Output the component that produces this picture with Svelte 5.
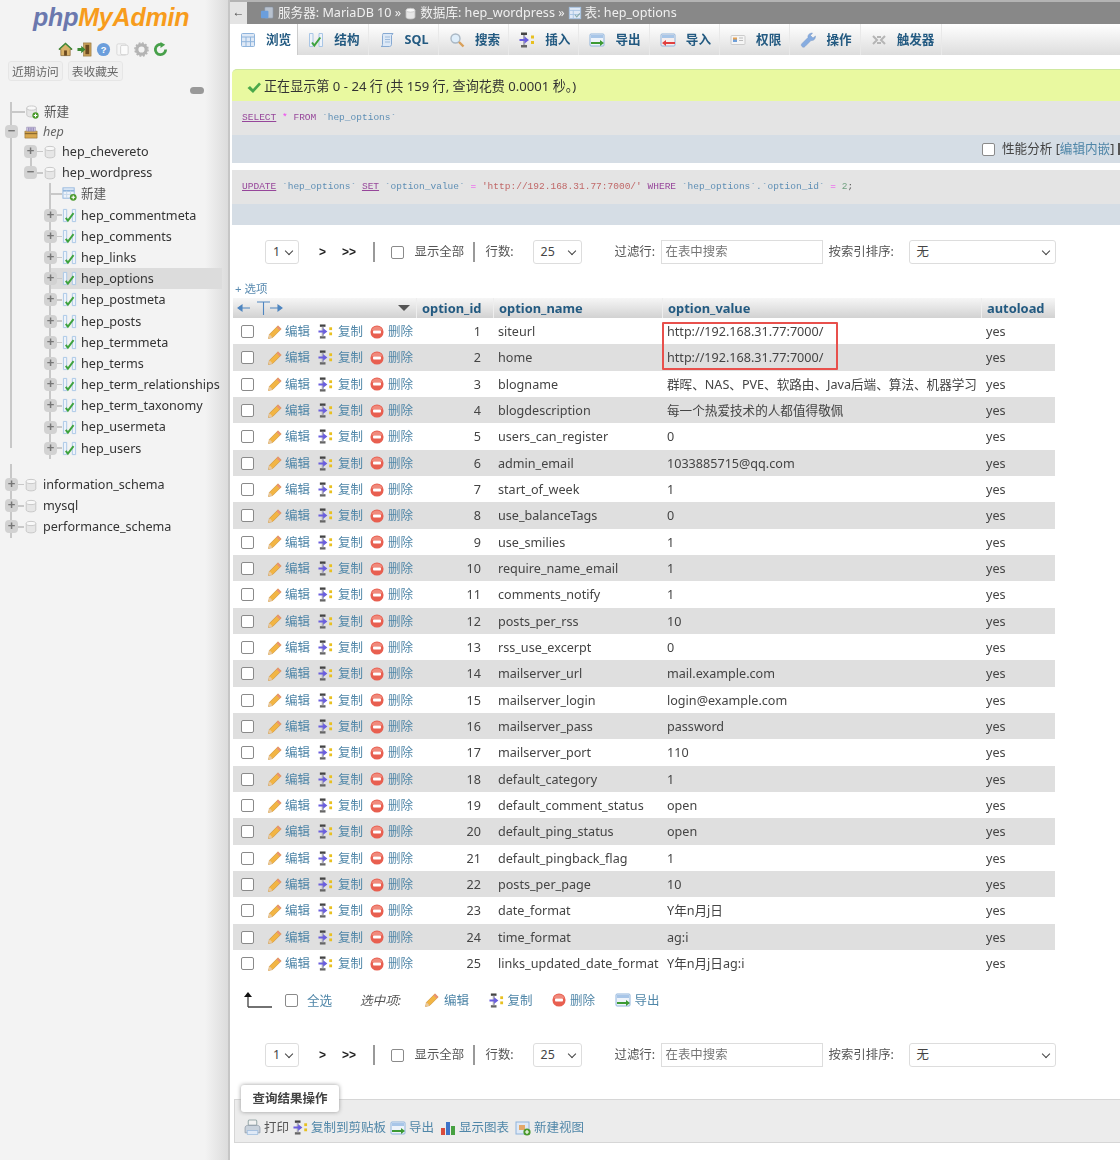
<script>
	const icons = {
		pencil: '<path d="M1.500 14.500l1-4.200L11 1.800l3.200 3.200-8.500 8.500z" fill="#f2b544" stroke="#c98a2a" stroke-width=".6"/><path d="M1.500 14.500l1-4.200 3.200 3.200z" fill="#e9c9a0"/><path d="M11 1.800l3.200 3.200-1.400 1.400-3.200-3.200z" fill="#e8907a"/>',
		copy: '<rect x="2" y="0.500" width="6" height="2.500" fill="#444"/><rect x="2" y="13" width="6" height="2.500" fill="#666"/><rect x="4" y="3" width="2.200" height="10" fill="#aab"/><path d="M0.500 7h5V4.500l4.500 3.500-4.500 3.500V9h-5z" fill="#6a5ede"/><rect x="12" y="3.500" width="3" height="3" fill="#e8c020"/><rect x="12" y="9" width="3" height="3" fill="#e8c020"/>',
		del: '<circle cx="8" cy="8" r="7.500" fill="#e85f50"/><path d="M1.500 6a7 7 0 0 1 13 0z" fill="#f08a7c"/><rect x="3.500" y="6.300" width="9" height="3.400" rx=".8" fill="#fff"/>',
		db: '<path d="M2.500 4v8.500c0 1.200 2.500 2.200 5.500 2.200s5.500-1 5.500-2.200V4z" fill="#e6e6e6" stroke="#c4c4c4"/><ellipse cx="8" cy="4" rx="5.500" ry="2.400" fill="#f8f8f8" stroke="#c4c4c4"/>',
		dbnew: '<path d="M2 3.500v8c0 1.200 2.500 2.200 5.500 2.200s5.500-1 5.500-2.200v-8z" fill="#e6e6e6" stroke="#c4c4c4"/><ellipse cx="7.500" cy="3.500" rx="5.500" ry="2.400" fill="#f8f8f8" stroke="#c4c4c4"/><circle cx="12" cy="12" r="3.600" fill="#4a9a2c"/><path d="M10 12h4M12 10v4" stroke="#fff" stroke-width="1.200"/>',
		tablenew: '<rect x="1" y="2" width="12" height="11" fill="#eef3fa" stroke="#8fb4dc"/><path d="M1 5h12" stroke="#8fb4dc" stroke-width="2"/><path d="M5 5v8M9 5v8M1 9h12" stroke="#c4d6ea"/><circle cx="12" cy="12" r="3.600" fill="#4a9a2c"/><path d="M10 12h4M12 10v4" stroke="#fff" stroke-width="1.200"/>',
		struct: '<path d="M1.500 1.500h3.500v13H1.500zM11 1.500h3.500v13H11z" fill="#eef3fa" stroke="#a9c6e6"/><path d="M4 10.500l2.300 3 6-8" fill="none" stroke="#3da23d" stroke-width="2"/>',
		browse: '<rect x="1.500" y="1.500" width="13" height="13" rx="1" fill="#dfe9f6" stroke="#8fb4dc"/><path d="M1.500 5h13M6 5v9.500M10.500 5v9.500M1.500 9.700h13" stroke="#8fb4dc"/>',
		sql: '<path d="M4 1.500h10l-1.500 2v9c0 1-1 2-2 2H2c1 0 1.500-1 1.500-2v-9c0-1 .5-2 .5-2z" fill="#dce8f6" stroke="#86a9d2"/><path d="M6 5h5M6 7.500h5M6 10h5" stroke="#9fbcdc"/>',
		search: '<circle cx="6.500" cy="6.500" r="4.500" fill="#dfeefa" stroke="#a9b7c4" stroke-width="1.400"/><path d="M10 10l4.500 4.500" stroke="#d9a05a" stroke-width="2.400"/>',
		exportt: '<rect x="1" y="2" width="14" height="12" rx="1" fill="#eef3fa" stroke="#8fb4dc"/><rect x="2" y="3" width="12" height="3" fill="#a8c6e8"/><path d="M2 10h9V8l4 3-4 3v-2H2z" fill="#3c9a34"/>',
		importt: '<rect x="1" y="2" width="14" height="12" rx="1" fill="#f6eeee" stroke="#8fb4dc"/><rect x="2" y="3" width="12" height="3" fill="#a8c6e8"/><path d="M15 10H6V8l-4 3 4 3v-2h9z" fill="#e04040"/>',
		priv: '<rect x="1" y="3.500" width="14" height="9" rx="1" fill="#f5f5f5" stroke="#ccc"/><rect x="3" y="5.500" width="4" height="4.500" fill="#e5a050"/><rect x="3" y="7.500" width="4" height="2.500" fill="#6f9fd8"/><path d="M9 6h4M9 8.500h4" stroke="#bbb"/>',
		ops: '<path d="M2 14.500c-1-1-1-2 0-3l6-6c-.5-2 1-4.500 4.500-4.500l-2 2.500 2.500 2.500 2.500-2c0 3.500-2.500 5-4.500 4.500l-6 6c-1 1-2 1-3 0z" fill="#86ace0" stroke="#7a98c4" stroke-width=".5"/>',
		trig: '<path d="M2 4l4 4-4 4M14 4l-4 4 4 4M6 5h4M6 11h4" fill="none" stroke="#b5b5b5" stroke-width="2"/>',
		home: '<path d="M1 8l7-6.500L15 8h-2v6.500H3V8z" fill="#d9b26a" stroke="#7b5a26" stroke-width=".7"/><path d="M1 8l7-6.500L15 8" fill="none" stroke="#3f8a3a" stroke-width="1.600"/><rect x="6.500" y="9" width="3" height="5.500" fill="#6b4a20"/>',
		exit: '<rect x="7" y="1" width="8" height="14" fill="#caa25c" stroke="#8c6a2e" stroke-width=".6"/><rect x="9" y="3" width="4" height="10" fill="#6b4a20"/><path d="M0.500 6.500h4V4l4.500 4-4.500 4V9.500h-4z" fill="#3c8a34"/>',
		box: '<path d="M1 7h14v8H1z" fill="#d9a84e" stroke="#8c6a2e" stroke-width=".6"/><path d="M3 7V2.500h10V7z" fill="#cfc8e2" stroke="#8a80a8" stroke-width=".6"/><path d="M5.500 3v4M8 3v4M10.500 3v4" stroke="#7d70a8"/><rect x="1" y="9" width="14" height="1.500" fill="#8c6a2e"/>',
		help: '<circle cx="8" cy="8" r="7" fill="#6b9edc"/><text x="8" y="11.500" text-anchor="middle" font-size="10" font-weight="700" fill="#fff" font-family="Liberation Sans">?</text>',
		docs: '<rect x="2" y="2" width="10" height="12" rx="1.500" fill="#f6f6f6" stroke="#d8d8d8"/><rect x="6" y="3.500" width="8" height="10" rx="1.500" fill="#fbfbfb" stroke="#d0d0d0"/>',
		gear: '<circle cx="8" cy="8" r="5" fill="none" stroke="#b4b4b4" stroke-width="3.400"/><circle cx="8" cy="8" r="7" fill="none" stroke="#b4b4b4" stroke-width="1.600" stroke-dasharray="2 1.700"/>',
		reload: '<path d="M13.500 8A5.500 5.500 0 1 1 9 2.600" fill="none" stroke="#47a04a" stroke-width="3"/><path d="M8 0l5 3-5 3.500z" fill="#47a04a"/>',
		server: '<rect x="5" y="1" width="9" height="12" rx="1" fill="#b8c2cf" stroke="#7f8a99" stroke-width=".6"/><rect x="1" y="5" width="8" height="8" rx="1" fill="#6b9edc"/>',
		table: '<rect x="1.500" y="1.500" width="13" height="13" fill="#dfe9f6" stroke="#a5c2e2"/><path d="M1.500 5h13M6 5v9.500M1.500 9.700h13" stroke="#a5c2e2"/><path d="M8 10l2 2.500 3.500-4" fill="none" stroke="#8aa" stroke-width="1.200"/>',
		print: '<rect x="4" y="1" width="8" height="5" rx="1" fill="#f2f2f2" stroke="#9aa"/><path d="M1 8.500c0-1.500 1-2.500 2.500-2.500h9c1.500 0 2.500 1 2.500 2.500V13H1z" fill="#c9d2dc" stroke="#8c98a6" stroke-width=".7"/><rect x="3" y="11" width="10" height="3.500" fill="#dfe9f6" stroke="#8fb4dc" stroke-width=".6"/>',
		chart: '<rect x="1" y="8" width="4" height="7" fill="#d94c3c"/><rect x="6" y="2" width="4" height="13" fill="#3f74c8"/><rect x="11" y="6" width="4" height="9" fill="#46a040"/>',
		view: '<rect x="1" y="2" width="13" height="12" fill="#dfe9f6" stroke="#8fb4dc"/><rect x="4" y="5" width="6" height="5" fill="#e3a86a"/><circle cx="12" cy="12" r="3.600" fill="#4a9a2c"/><path d="M10 12h4M12 10v4" stroke="#fff" stroke-width="1.200"/>'
	};

	const tables = [
		'hep_commentmeta', 'hep_comments', 'hep_links', 'hep_options', 'hep_postmeta', 'hep_posts',
		'hep_termmeta', 'hep_terms', 'hep_term_relationships', 'hep_term_taxonomy', 'hep_usermeta', 'hep_users'
	];

	const tabs = [
		['browse', '浏览'], ['struct', '结构'], ['sql', 'SQL'], ['search', '搜索'], ['copy', '插入'],
		['exportt', '导出'], ['importt', '导入'], ['priv', '权限'], ['ops', '操作'], ['trig', '触发器']
	];

	const rows = [
		['siteurl', 'http://192.168.31.77:7000/'],
		['home', 'http://192.168.31.77:7000/'],
		['blogname', '群晖、NAS、PVE、软路由、Java后端、算法、机器学习'],
		['blogdescription', '每一个热爱技术的人都值得敬佩'],
		['users_can_register', '0'],
		['admin_email', '1033885715@qq.com'],
		['start_of_week', '1'],
		['use_balanceTags', '0'],
		['use_smilies', '1'],
		['require_name_email', '1'],
		['comments_notify', '1'],
		['posts_per_rss', '10'],
		['rss_use_excerpt', '0'],
		['mailserver_url', 'mail.example.com'],
		['mailserver_login', 'login@example.com'],
		['mailserver_pass', 'password'],
		['mailserver_port', '110'],
		['default_category', '1'],
		['default_comment_status', 'open'],
		['default_ping_status', 'open'],
		['default_pingback_flag', '1'],
		['posts_per_page', '10'],
		['date_format', 'Y年n月j日'],
		['time_format', 'ag:i'],
		['links_updated_date_format', 'Y年n月j日ag:i']
	];
</script>

{#snippet icon(name, size = 14)}
	<svg class="ic" viewBox="0 0 16 16" width={size} height={size}>{@html icons[name]}</svg>
{/snippet}

{#snippet pager()}
	<div class="pager">
		<span class="sel page-sel">1</span>
		<b class="next">&gt;</b>
		<b class="last">&gt;&gt;</b>
		<i class="sep first-sep"></i>
		<span class="check"></span>
		<span class="all">显示全部</span>
		<i class="sep"></i>
		<span class="rows-label">行数:</span>
		<span class="sel count-sel">25</span>
		<span class="filter-label">过滤行:</span>
		<span class="search">在表中搜索</span>
		<span class="order-label">按索引排序:</span>
		<span class="sel order-sel">无</span>
	</div>
{/snippet}

<div class="page">
	<aside>
		<div class="logo"><span class="php">php</span><span class="my">MyAdmin</span></div>
		<div class="quick">
			{#each ['home', 'exit', 'help', 'docs', 'gear', 'reload'] as n}
				{@render icon(n, 15)}
			{/each}
		</div>
		<div class="recent">
			<span>近期访问</span>
			<span>表收藏夹</span>
		</div>
		<div class="link-row"><span class="pill"></span></div>

		<div class="group top">
			<div class="item lv0 first"><i class="dash"></i>{@render icon('dbnew', 14)}<span class="cjk">新建</span></div>
			<div class="item lv0 hep"><i class="exp">−</i>{@render icon('box', 14)}<em>hep</em></div>
			<div class="lv1">
				<div class="item linked"><i class="exp">+</i><i class="dash"></i>{@render icon('db', 14)}<span>hep_chevereto</span></div>
				<div class="item"><i class="exp">−</i><i class="dash"></i>{@render icon('db', 14)}<span>hep_wordpress</span></div>
				<div class="lv2">
					<div class="item"><i class="dash long"></i>{@render icon('tablenew', 15)}<span class="cjk">新建</span></div>
					{#each tables as t}
						<div class="item" class:current={t === 'hep_options'}><i class="exp">+</i><i class="dash"></i>{@render icon('struct', 15)}<span>{t}</span></div>
					{/each}
				</div>
			</div>
		</div>
		<div class="group bottom">
			{#each ['information_schema', 'mysql', 'performance_schema'] as d}
				<div class="item lv0"><i class="exp">+</i><i class="dash"></i>{@render icon('db', 14)}<span>{d}</span></div>
			{/each}
		</div>
	</aside>

	<main>
		<div class="crumbs">
			<span class="collapse">←</span>
			<span class="trail">
				{@render icon('server', 15)}<span>服务器: MariaDB 10 »</span>
				{@render icon('db', 13)}<span>数据库: hep_wordpress »</span>
				{@render icon('table', 14)}<span>表: hep_options</span>
			</span>
		</div>
		<nav>
			{#each tabs as [ic, label], i}
				<span class="tab" class:active={i === 0}>{@render icon(ic, 16)}<b>{label}</b></span>
			{/each}
		</nav>

		<div class="notice">
			<svg viewBox="0 0 16 16" width="16" height="16"><path d="M1.500 9l2.500-2 3 3 6-6.500 2 1.800L7 14z" fill="#4aa84a" /></svg>
			正在显示第 0 - 24 行 (共 159 行, 查询花费 0.0001 秒。)
		</div>
		<div class="sql"><u class="kw">SELECT</u> <span class="op">*</span> <span class="kw">FROM</span> <span class="id">`hep_options`</span></div>
		<div class="tools">
			<span class="check"></span><span class="perf">性能分析 [<a href="#top">编辑内嵌</a>]</span><i class="bar"></i>
		</div>
		<div class="sql second"><u class="kw">UPDATE</u> <span class="id">`hep_options`</span> <u class="kw">SET</u> <span class="id">`option_value`</span> <span class="op">=</span> <span class="str">'http://192.168.31.77:7000/'</span> <span class="kw">WHERE</span> <span class="id">`hep_options`.`option_id`</span> <span class="op">=</span> <span class="num">2</span>;</div>
		<div class="tools thin"></div>

		{@render pager()}

		<div class="options"><span>+</span> 选项</div>

		<div class="grid">
			<div class="head">
				<div class="first-col">
					<svg viewBox="0 0 46 16" width="46" height="16"><path d="M1 8h12M1 8l4-3v6zM20 2h13M26.500 2v13M33 8h12M45 8l-4-3v6z" fill="#4f86c0" stroke="#4f86c0" stroke-width="1.100" /></svg>
					<span class="sort"></span>
				</div>
				<div>option_id</div>
				<div>option_name</div>
				<div>option_value</div>
				<div>autoload</div>
			</div>
			{#each rows as [name, value], i}
				<div class="row">
					<div class="actions">
						<span class="check"></span>
						<span class="act edit">{@render icon('pencil', 16)}<a href="#top">编辑</a></span>
						<span class="act copy">{@render icon('copy', 15)}<a href="#top">复制</a></span>
						<span class="act drop">{@render icon('del', 14)}<a href="#top">删除</a></span>
					</div>
					<div class="id-cell">{i + 1}</div>
					<div>{name}</div>
					<div>{value}</div>
					<div>yes</div>
				</div>
			{/each}
			<div class="mark"></div>
		</div>

		<div class="bulk">
			<svg class="up" viewBox="0 0 28 18" width="28" height="18"><path d="M4 16V4M4 16h24" fill="none" stroke="#444" stroke-width="1.300" /><path d="M0 6l4-5 4 5z" fill="#111" /></svg>
			<span class="check"></span>
			<a class="select-all" href="#top">全选</a>
			<em>选中项:</em>
			<span class="act">{@render icon('pencil', 16)}<a href="#top">编辑</a></span>
			<span class="act">{@render icon('copy', 15)}<a href="#top">复制</a></span>
			<span class="act">{@render icon('del', 14)}<a href="#top">删除</a></span>
			<span class="act">{@render icon('exportt', 16)}<a href="#top">导出</a></span>
		</div>

		{@render pager()}

		<section class="results">
			<div class="legend">查询结果操作</div>
			<div class="links">
				<span>{@render icon('print', 17)}<a class="dark" href="#top">打印</a></span>
				<span>{@render icon('copy', 15)}<a href="#top">复制到剪贴板</a></span>
				<span>{@render icon('exportt', 16)}<a href="#top">导出</a></span>
				<span>{@render icon('chart', 16)}<a href="#top">显示图表</a></span>
				<span>{@render icon('view', 16)}<a href="#top">新建视图</a></span>
			</div>
		</section>
	</main>
</div>

<style>
	:global(body) {
		margin: 0;
		background: #fff;
	}
	.page {
		display: flex;
		width: 1120px;
		height: 1160px;
		overflow: hidden;
		font: 12.6px/1.2 'Noto Sans', 'Noto Sans CJK SC', sans-serif;
		color: #444;
		filter: blur(0.55px);
	}
	.ic {
		flex: none;
		vertical-align: middle;
	}
	a {
		color: #4f86a8;
		text-decoration: none;
	}

	/* navigation */
	aside {
		flex: none;
		width: 228px;
		height: 100%;
		box-sizing: border-box;
		background: linear-gradient(90deg, #f3f3f3 0, #f3f3f3 205px, #dcdcdc 100%);
	}
	.logo {
		height: 31px;
		padding: 2px 0 0 33px;
		font: italic 700 25px/30px 'Liberation Sans', sans-serif;
		letter-spacing: -0.2px;
		box-sizing: border-box;
	}
	.php {
		color: #6b78ae;
	}
	.my {
		color: #f79c1c;
	}
	.quick {
		display: flex;
		gap: 4px;
		height: 22px;
		margin-top: 7px;
		padding-left: 58px;
		align-items: center;
	}
	.recent {
		display: flex;
		gap: 5px;
		margin-top: 1px;
		padding-left: 8px;
		height: 20px;
		font-size: 11.7px;
		color: #666;
	}
	.recent span {
		padding: 0 3px;
		line-height: 18px;
		height: 18px;
		background: #f0f0f0;
		border: 1px solid #e6e6e6;
		border-radius: 3px;
	}
	.link-row {
		display: flex;
		justify-content: flex-end;
		height: 23px;
		padding: 6px 24px 0 0;
		box-sizing: border-box;
	}
	.pill {
		width: 14px;
		height: 7px;
		border-radius: 4px;
		background: #999;
	}
	.group {
		margin-left: 10px;
		border-left: 2px solid #c8c8c8;
	}
	.group.top {
		margin-top: 8px;
		height: 346px;
	}
	.group.bottom {
		margin-top: 16px;
		padding-top: 10px;
		height: 64px;
	}
	.item {
		position: relative;
		display: flex;
		align-items: center;
		height: 21.2px;
		white-space: nowrap;
		color: #333;
	}
	.item.first {
		height: 20px;
		margin-top: -10px;
	}
	.item.hep {
		height: 19px;
	}
	.lv0 > .ic {
		margin-right: 5px;
	}
	.lv1 {
		margin-left: 19px;
	}
	.lv1 > .item > .ic {
		margin-right: 5px;
	}
	.lv2 {
		margin-left: 18px;
		border-left: 2px solid #c8c8c8;
		height: 276px;
	}
	.lv2 .ic {
		margin-right: 4px;
	}
	.exp {
		position: relative;
		z-index: 1;
		flex: none;
		width: 13px;
		height: 13px;
		margin-left: -7px;
		border-radius: 4px;
		background: #d2d2d2;
		color: #777;
		font: 700 13px/12px 'Liberation Sans', sans-serif;
		text-align: center;
	}
	.dash {
		flex: none;
		width: 6px;
		height: 1.5px;
		background: #c8c8c8;
	}
	.lv2 .dash {
		width: 5px;
	}
	.lv2 .dash.long {
		width: 11px;
	}
	.lv0 > .dash:first-child {
		width: 13px;
	}
	.hep .exp {
		margin-right: 6px;
	}
	.hep em {
		color: #666;
	}
	.linked::before {
		content: '';
		position: absolute;
		left: -1px;
		top: 10px;
		height: 22px;
		width: 2px;
		background: #c8c8c8;
	}
	.current {
		background: #dcdcdc;
		margin-right: 6px;
	}
	.cjk {
		color: #555;
	}

	/* main */
	main {
		flex: 1;
		min-width: 0;
		border-left: 2px solid #c6c6c6;
		box-sizing: border-box;
		height: 100%;
	}
	.crumbs {
		display: flex;
		height: 24px;
		background: #888;
		border-top: 2px solid #b4b4b4;
		box-sizing: border-box;
		color: #f0f0f0;
	}
	.collapse {
		width: 17px;
		background: #e4e4e4;
		color: #444;
		font: 12px/20px 'Liberation Sans', sans-serif;
		text-align: center;
	}
	.trail {
		display: flex;
		align-items: center;
		gap: 3px;
		padding-left: 13px;
		white-space: pre;
	}
	nav {
		display: flex;
		height: 31px;
		background: linear-gradient(#fff, #ddd);
	}
	.tab {
		display: flex;
		align-items: center;
		gap: 10px;
		width: 70.3px;
		box-sizing: border-box;
		padding-left: 10px;
		border-right: 1px solid #e9e9e9;
		color: #235a81;
		white-space: nowrap;
	}
	.tab:first-child {
		width: 68.3px;
	}
	.tab:last-child {
		width: 81px;
	}
	.active {
		background: #fff;
		border-right: 1px solid #ccc;
	}
	.notice {
		display: flex;
		align-items: center;
		gap: 2px;
		height: 32px;
		margin: 14px 0 0 2px;
		padding: 2px 0 0 14px;
		background: #e9f9a0;
		border-radius: 5px 0 0 0;
		border-top: 1px solid #cfe8a0;
		box-sizing: border-box;
		color: #333;
		font-size: 13.1px;
	}
	.sql {
		height: 34px;
		margin-left: 2px;
		padding: 11px 0 0 10px;
		box-sizing: border-box;
		background: #e4e4e4;
		font: 9.52px/12px 'Liberation Mono', monospace;
		white-space: pre;
		color: #555;
	}
	.sql.second {
		margin-top: 7px;
	}
	.kw {
		color: #96469a;
	}
	.op {
		color: #f040f0;
	}
	.id {
		color: #5f8fb5;
	}
	.str {
		color: #c06868;
	}
	.num {
		color: #70a080;
	}
	.tools {
		display: flex;
		align-items: center;
		justify-content: flex-end;
		height: 28px;
		margin-left: 2px;
		background: #d5dde5;
		white-space: nowrap;
	}
	.tools .check {
		margin-right: 7px;
	}
	.perf {
		flex: none;
		width: 116px;
	}
	.bar {
		width: 2px;
		height: 12px;
		background: #555;
	}
	.tools.thin {
		height: 21px;
	}
	.check {
		flex: none;
		display: inline-block;
		width: 11px;
		height: 11px;
		border: 1px solid #8a8a8a;
		border-radius: 2px;
		background: #fff;
	}
	.pager {
		display: flex;
		align-items: center;
		height: 24px;
		margin: 15px 0 0 35px;
		font-size: 12.4px;
		color: #555;
		white-space: nowrap;
	}
	.sel {
		position: relative;
		box-sizing: border-box;
		height: 24px;
		line-height: 22px;
		padding-left: 7px;
		border: 1px solid #ddd;
		border-radius: 3px;
		background: #fff;
		color: #444;
	}
	.sel::after {
		content: '';
		position: absolute;
		right: 6px;
		top: 7px;
		width: 5px;
		height: 5px;
		border: solid #444;
		border-width: 0 1.5px 1.5px 0;
		transform: rotate(45deg);
	}
	.page-sel {
		width: 34px;
	}
	.next {
		margin-left: 20px;
		width: 23px;
		font: 700 12px 'Liberation Sans', sans-serif;
		color: #222;
	}
	.last {
		font: 700 12px 'Liberation Sans', sans-serif;
		color: #222;
		margin-right: 17px;
	}
	.sep {
		width: 1.5px;
		height: 20px;
		background: #999;
		margin: 0 11px 0 9px;
	}
	.first-sep {
		margin: 0 16px 0 0;
	}
	.all {
		margin-left: 11px;
	}
	.rows-label {
		width: 47px;
	}
	.count-sel {
		width: 49px;
	}
	.filter-label {
		margin-left: 33px;
		width: 46px;
	}
	.search {
		box-sizing: border-box;
		width: 162px;
		height: 24px;
		line-height: 22px;
		padding-left: 4px;
		border: 1px solid #ddd;
		color: #777;
	}
	.order-label {
		margin-left: 6px;
		width: 80px;
	}
	.order-sel {
		width: 147px;
	}
	.options {
		margin: 17px 0 0 5px;
		height: 16px;
		font-size: 11.5px;
		line-height: 16px;
		color: #5a8bb0;
	}
	.grid {
		position: relative;
		width: 822px;
		margin: 1px 0 0 3px;
	}
	.head,
	.row {
		display: grid;
		grid-template-columns: 183px 77px 169px 319px 74px;
		align-items: center;
	}
	.head {
		height: 20px;
		background: linear-gradient(#f6f6f6, #d2d2d2);
		color: #235a81;
		font-weight: 700;
		font-size: 12.9px;
		line-height: 20px;
	}
	.head > div {
		padding-left: 5px;
		border-left: 1px solid #eee;
		height: 20px;
		box-sizing: border-box;
	}
	.head > .first-col {
		display: flex;
		justify-content: space-between;
		align-items: center;
		padding: 0 6px 0 4px;
		border: 0;
	}
	.sort {
		border: 6px solid transparent;
		border-top: 6px solid #555;
		border-bottom: 0;
	}
	.row {
		height: 26.33px;
		white-space: nowrap;
	}
	.row:nth-child(odd) {
		background: #dfdfdf;
	}
	.row > div {
		padding: 1px 0 0 5px;
	}
	.row > .actions {
		display: flex;
		align-items: center;
		padding-left: 8px;
	}
	.row > .id-cell {
		padding: 1px 12px 0 0;
		text-align: right;
	}
	.act {
		display: inline-flex;
		align-items: center;
		gap: 3px;
		font-size: 12.5px;
	}
	.act.edit {
		margin-left: 13px;
		width: 51px;
		gap: 2px;
	}
	.act.copy {
		width: 52px;
		gap: 5px;
	}
	.act.drop {
		gap: 4px;
	}
	.mark {
		position: absolute;
		left: 429px;
		top: 24px;
		width: 176px;
		height: 48px;
		box-sizing: border-box;
		border: 2px solid #e8504c;
		border-radius: 1px;
	}
	.bulk {
		display: flex;
		align-items: center;
		height: 24px;
		margin: 12px 0 0 14px;
	}
	.bulk .up {
		margin-right: 13px;
	}
	.select-all {
		margin-left: 9px;
		width: 53px;
	}
	.bulk em {
		width: 64px;
		color: #555;
	}
	.bulk .act {
		margin-right: 19.5px;
		gap: 4px;
	}
	.bulk + .pager {
		margin-top: 31px;
	}
	.results {
		position: relative;
		height: 44px;
		margin: 32px 0 0 4px;
		background: #ececec;
		border: 1px solid #d6d6d6;
		border-right: 0;
		box-sizing: border-box;
	}
	.legend {
		position: absolute;
		left: 6px;
		top: -15px;
		box-sizing: border-box;
		width: 98px;
		height: 27px;
		line-height: 27px;
		text-align: center;
		background: #fff;
		border-radius: 3px;
		box-shadow: 0 0 4px #999;
		font-size: 12.5px;
		font-weight: 700;
		color: #444;
	}
	.links {
		display: flex;
		gap: 4px;
		padding: 19px 0 0 9px;
		font-size: 12.5px;
		white-space: nowrap;
	}
	.links span {
		display: inline-flex;
		align-items: center;
		gap: 3px;
	}
	.links span:nth-child(n + 4) {
		margin-left: 2px;
	}
	.links .dark {
		color: #555;
	}
</style>
